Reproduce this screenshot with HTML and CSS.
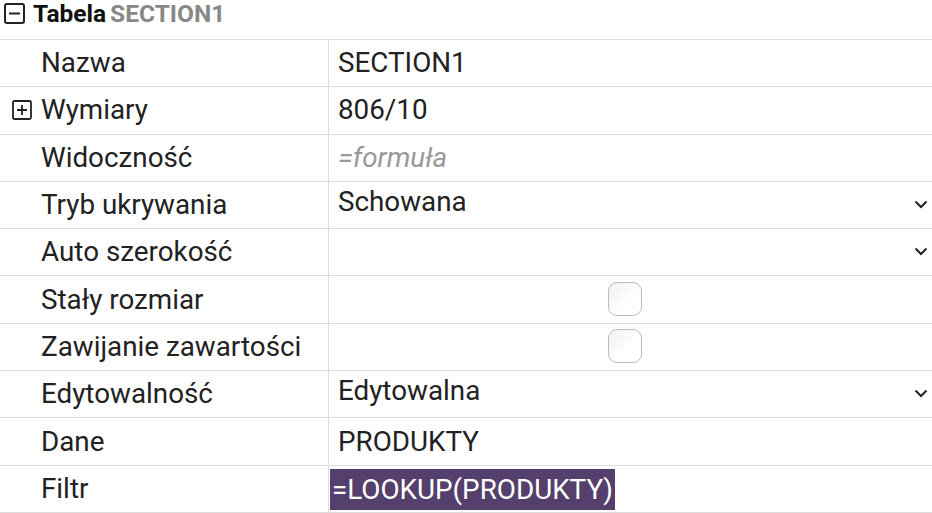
FILE: index.html
```html
<!DOCTYPE html>
<html lang="pl">
<head>
<meta charset="utf-8">
<link rel="stylesheet" href="styles.css">
</head>
<body>
<div class="panel">
  <div class="header">
    <svg class="box-icon" width="21" height="21" viewBox="0 0 21 21"><rect x="1" y="1" width="19" height="19" rx="2" fill="none" stroke="#222" stroke-width="2"/><path d="M5 10.5h11" stroke="#222" stroke-width="2"/></svg>
    <span class="title">Tabela</span>
    <span class="name">SECTION1</span>
  </div>
  <div class="grid">
    <div class="label">Nazwa</div><div class="value">SECTION1</div>
    <div class="label exp"><svg class="box-icon small" width="20" height="20" viewBox="0 0 20 20"><rect x="1" y="1" width="18" height="18" rx="1.5" fill="none" stroke="#222" stroke-width="1.8"/><path d="M5 10h10M10 5v10" stroke="#222" stroke-width="1.8"/></svg>Wymiary</div><div class="value">806/10</div>
    <div class="label">Widoczność</div><div class="value placeholder">=formuła</div>
    <div class="label">Tryb ukrywania</div><div class="value select"><span>Schowana</span><svg class="chev" width="14" height="9" viewBox="0 0 14 9"><path d="M1.5 1.5l5.5 5.5 5.5-5.5" fill="none" stroke="#222" stroke-width="2"/></svg></div>
    <div class="label">Auto szerokość</div><div class="value select"><span></span><svg class="chev" width="14" height="9" viewBox="0 0 14 9"><path d="M1.5 1.5l5.5 5.5 5.5-5.5" fill="none" stroke="#222" stroke-width="2"/></svg></div>
    <div class="label">Stały rozmiar</div><div class="value center"><span class="check"></span></div>
    <div class="label">Zawijanie zawartości</div><div class="value center"><span class="check"></span></div>
    <div class="label">Edytowalność</div><div class="value select"><span>Edytowalna</span><svg class="chev" width="14" height="9" viewBox="0 0 14 9"><path d="M1.5 1.5l5.5 5.5 5.5-5.5" fill="none" stroke="#222" stroke-width="2"/></svg></div>
    <div class="label">Dane</div><div class="value">PRODUKTY</div>
    <div class="label">Filtr</div><div class="value formula"><span class="sel">=LOOKUP(PRODUKTY)</span></div>
  </div>
</div>
</body>
</html>
```
FILE: styles.css
```css
html, body {
  margin: 0;
  padding: 0;
  background: #fff;
}
body {
  font-family: Roboto, "Liberation Sans", sans-serif;
  color: #222;
  width: 932px;
  height: 513px;
  overflow: hidden;
}
.header {
  height: 40px;
  display: flex;
  align-items: center;
  padding-left: 4px;
  gap: 6px;
  border-bottom: 1px solid #ddd;
  box-sizing: border-box;
  font-size: 24.5px;
  font-weight: bold;
  padding-bottom: 12px;
}
.header .box-icon {
  margin-right: 2px;
}
.header .title {
  color: #111;
}
.header .name {
  color: #888;
  margin-left: -2px;
}
.grid {
  display: grid;
  grid-template-columns: 329px 1fr;
  grid-auto-rows: 47.3px;
}
.label, .value {
  border-bottom: 1px solid #ddd;
  display: flex;
  align-items: center;
  font-size: 27.8px;
  box-sizing: border-box;
  padding-bottom: 1px;
}
.label {
  padding-left: 41px;
  border-right: 1px solid #ddd;
  color: #222;
}
.label.exp {
  padding-left: 12px;
}
.label.exp .box-icon {
  margin-right: 9px;
}
.value {
  padding-left: 9px;
}
.placeholder {
  color: #999;
  font-style: italic;
}
.select {
  justify-content: space-between;
  padding-right: 4px;
  align-items: flex-start;
  padding-top: 3px;
}
.select .chev {
  margin-top: 15px;
}
.center {
  justify-content: center;
  padding-left: 0;
  padding-right: 12px;
}
.check {
  width: 32px;
  height: 32px;
  border: 1px solid #bbb;
  border-radius: 9px;
  background: linear-gradient(135deg, #f0f0f0, #fff 60%);
}
.formula {
  padding-left: 1px;
}
.sel {
  background: #553f6c;
  color: #fff;
  height: 41px;
  display: flex;
  align-items: center;
  padding: 0 2px;
  margin-top: 2px;
}
```
